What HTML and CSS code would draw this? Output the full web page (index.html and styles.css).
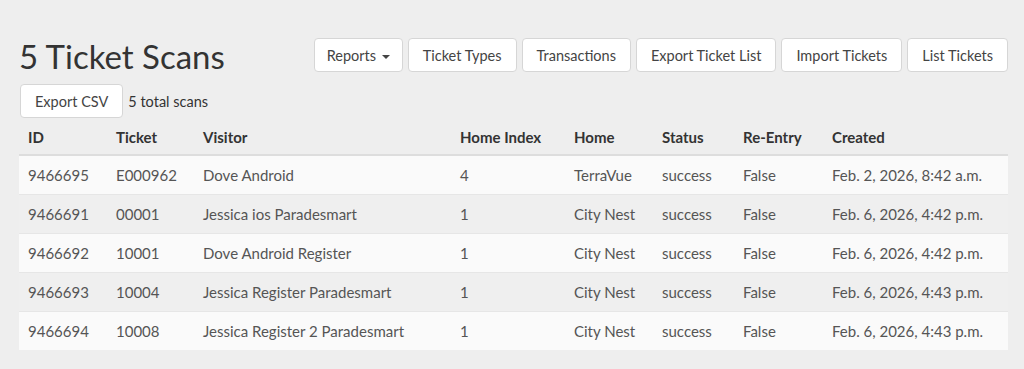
FILE: index.html
```html
<!DOCTYPE html>
<html lang="en">
<head>
  <meta charset="UTF-8">
  <meta name="viewport" content="width=device-width, initial-scale=1.0">
  <title>5 Ticket Scans</title>
  <link rel="stylesheet" href="styles.css">
</head>
<body>

  <div class="page">
    <div class="top">
      <h1>5 Ticket Scans</h1>
      <div class="actions">
        <button class="btn btn-drop">Reports <span class="caret"></span></button>
        <button class="btn">Ticket Types</button>
        <button class="btn">Transactions</button>
        <button class="btn">Export Ticket List</button>
        <button class="btn">Import Tickets</button>
        <button class="btn">List Tickets</button>
      </div>
    </div>

    <div class="sub">
      <button class="btn">Export CSV</button>
      <span class="count">5 total scans</span>
    </div>

    <table class="scans">
      <colgroup>
        <col style="width: 88px">
        <col style="width: 87px">
        <col style="width: 257px">
        <col style="width: 114px">
        <col style="width: 88px">
        <col style="width: 81px">
        <col style="width: 89px">
        <col>
      </colgroup>
      <thead>
        <tr>
          <th>ID</th>
          <th>Ticket</th>
          <th>Visitor</th>
          <th>Home Index</th>
          <th>Home</th>
          <th>Status</th>
          <th>Re-Entry</th>
          <th>Created</th>
        </tr>
      </thead>
      <tbody id="scan-rows"></tbody>
    </table>
  </div>

  <script>
    const scans = [
      ['9466695', 'E000962', 'Dove Android', '4', 'TerraVue', 'success', 'False', 'Feb. 2, 2026, 8:42 a.m.'],
      ['9466691', '00001', 'Jessica ios Paradesmart', '1', 'City Nest', 'success', 'False', 'Feb. 6, 2026, 4:42 p.m.'],
      ['9466692', '10001', 'Dove Android Register', '1', 'City Nest', 'success', 'False', 'Feb. 6, 2026, 4:42 p.m.'],
      ['9466693', '10004', 'Jessica Register Paradesmart', '1', 'City Nest', 'success', 'False', 'Feb. 6, 2026, 4:43 p.m.'],
      ['9466694', '10008', 'Jessica Register 2 Paradesmart', '1', 'City Nest', 'success', 'False', 'Feb. 6, 2026, 4:43 p.m.']
    ];

    const body = document.getElementById('scan-rows');
    scans.forEach(row => {
      const tr = document.createElement('tr');
      row.forEach(value => {
        const td = document.createElement('td');
        td.textContent = value;
        tr.appendChild(td);
      });
      body.appendChild(tr);
    });
  </script>
</body>
</html>
```

FILE: styles.css
```css
body {
  font-family: 'Lato', 'Open Sans', sans-serif;
  margin: 0;
  padding: 0;
  background-color: #eeeeee;
  color: #555;
  font-size: 15px;
}
.page {
  padding: 38px 16px 0 19px;
}
.top {
  display: flex;
  justify-content: space-between;
  align-items: flex-start;
}
h1 {
  margin: 0;
  font-size: 33px;
  font-weight: 400;
  line-height: 36px;
  color: #333;
}
.actions {
  display: flex;
  gap: 5px;
}
.btn {
  font-family: inherit;
  font-size: 14.5px;
  color: #444;
  background-color: #fff;
  border: 1px solid #d6d6d6;
  border-radius: 4px;
  height: 34px;
  padding: 0 14px;
  cursor: pointer;
}
.btn-drop {
  padding: 0 12px;
}
.caret {
  display: inline-block;
  width: 0;
  height: 0;
  margin-left: 2px;
  vertical-align: middle;
  border-top: 4px solid #444;
  border-left: 4px solid transparent;
  border-right: 4px solid transparent;
}
.sub {
  display: flex;
  align-items: center;
  gap: 5px;
  margin-top: 10px;
}
.sub .btn {
  margin-left: 1px;
}
.count {
  color: #333;
  font-size: 14.5px;
}
.scans {
  width: 989px;
  margin-top: 2px;
  border-collapse: collapse;
  table-layout: fixed;
}
.scans th {
  text-align: left;
  font-weight: 700;
  color: #333;
  padding: 7px 9px;
  line-height: 20px;
  border-bottom: 2px solid #dddddd;
}
.scans td {
  padding: 8px 9px;
  line-height: 22px;
  border-top: 1px solid #e6e6e6;
  white-space: nowrap;
}
.scans tbody tr:nth-child(odd) {
  background-color: #fafafa;
}
.scans tbody tr:nth-child(even) {
  background-color: #efefef;
}
```
